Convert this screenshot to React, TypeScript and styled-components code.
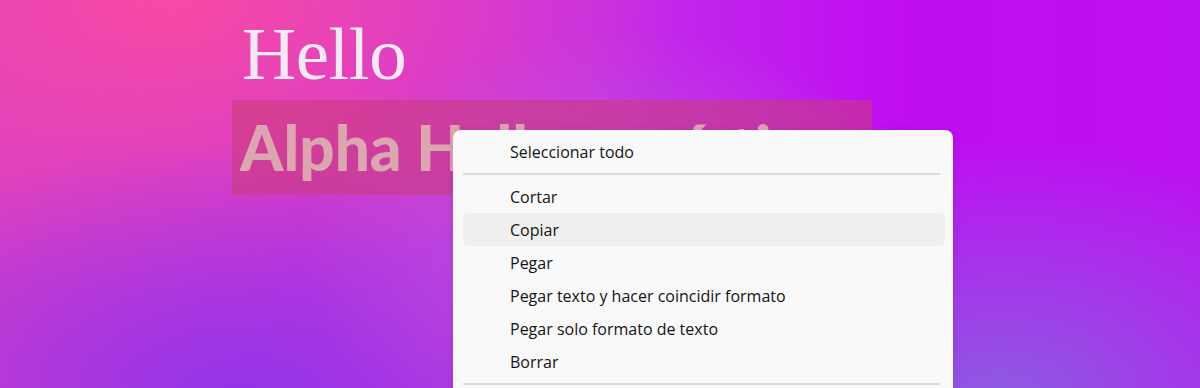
import React from 'react'
import styled, { createGlobalStyle } from 'styled-components'

const GlobalStyle = createGlobalStyle`
  html, body {
    margin: 0;
    padding: 0;
  }
  body {
    font-family: "Open Sans", "Noto Sans", sans-serif;
  }
`;

type Entry = { label: string; active?: boolean } | 'sep';

const entries: Entry[] = [
  { label: 'Seleccionar todo' },
  'sep',
  { label: 'Cortar' },
  { label: 'Copiar', active: true },
  { label: 'Pegar' },
  { label: 'Pegar texto y hacer coincidir formato' },
  { label: 'Pegar solo formato de texto' },
  { label: 'Borrar' },
  'sep',
];

const App = () => {
  const items = entries.map((e, i) =>
    e === 'sep'
      ? <Separator key={i} />
      : <MenuItem key={i} active={e.active}>{e.label}</MenuItem>
  );
  return (
    <>
      <GlobalStyle />
      <Page>
        <Content>
          <Title>Hello</Title>
          <Selection>Alpha Hello ○ mística</Selection>
        </Content>
        <Menu>{items}</Menu>
      </Page>
    </>
  );
};

export default App

const Page = styled.div`
  position: relative;
  width: 1200px;
  height: 388px;
  overflow: hidden;
  background:
    radial-gradient(ellipse 320px 220px at 620px 250px, rgba(190, 95, 215, 0.75), rgba(190, 95, 215, 0) 100%),
    radial-gradient(ellipse 420px 260px at 1000px 400px, rgba(135, 100, 225, 0.9), rgba(135, 100, 225, 0) 100%),
    radial-gradient(ellipse 460px 260px at 240px 400px, rgba(146, 52, 232, 1), rgba(146, 52, 232, 0) 100%),
    radial-gradient(ellipse 520px 300px at 170px 0px, rgba(248, 74, 165, 1), rgba(248, 74, 165, 0) 100%),
    linear-gradient(90deg, #d43ec8 0%, #c22ee8 50%, #c00df2 75%, #bd10f0 100%);
`;

const Content = styled.div`
  display: flex;
  flex-direction: column;
  align-items: flex-start;
  padding: 12px 0 0 232px;
`;

const Title = styled.h1`
  margin: 0 0 0 10px;
  font-family: "Liberation Serif", "DejaVu Serif", serif;
  font-weight: 400;
  font-size: 75px;
  line-height: 84px;
  color: #f2eaf2;
  letter-spacing: -0.5px;
`;

const Selection = styled.div`
  margin-top: 4px;
  width: 640px;
  height: 95px;
  box-sizing: border-box;
  padding: 0 0 0 8px;
  background: rgba(200, 60, 120, 0.55);
  font-family: Lato, "Open Sans", sans-serif;
  font-weight: 900;
  font-size: 62px;
  line-height: 95px;
  color: #dca6b0;
  white-space: nowrap;
  overflow: hidden;
`;

const Menu = styled.div`
  position: absolute;
  left: 453px;
  top: 130px;
  width: 500px;
  height: 300px;
  box-sizing: border-box;
  padding: 5px 8px 0 10px;
  background: #f9f9f9;
  border-radius: 8px;
  box-shadow: 0 2px 10px rgba(60, 0, 80, 0.12);
  display: flex;
  flex-direction: column;
`;

const MenuItem = styled.div<{ active?: boolean }>`
  height: 33px;
  display: flex;
  align-items: center;
  padding-left: 47px;
  border-radius: 5px;
  font-family: "Open Sans", "Noto Sans", sans-serif;
  font-size: 16px;
  color: #141414;
  background: ${p => (p.active ? '#efefef' : 'transparent')};
`;

const Separator = styled.div`
  height: 2px;
  margin: 5px 5px 5px 0;
  background: #dadada;
`;
